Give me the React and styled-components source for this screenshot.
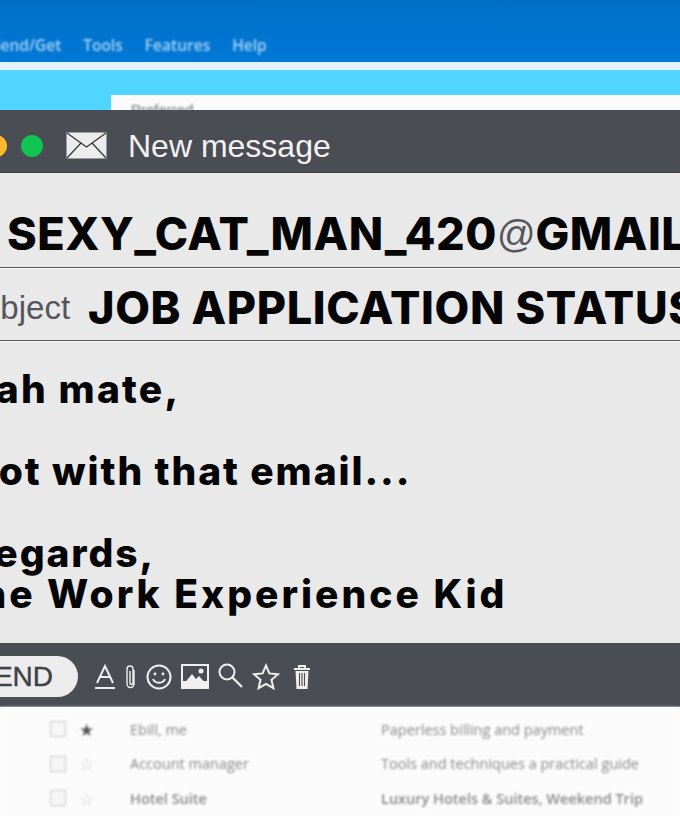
import React from "react";
import styled, { createGlobalStyle } from "styled-components";

const GlobalStyle = createGlobalStyle`
  html, body {
    margin: 0;
    padding: 0;
    background: #fff;
  }
`;

const Page = styled.div`
  width: 680px;
  height: 816px;
  overflow: hidden;
  font-family: "Liberation Sans", Arial, sans-serif;
`;

const TopArea = styled.div`
  height: 110px;
  display: flex;
  flex-direction: column;
  overflow: hidden;
`;

const MenuBar = styled.div`
  height: 62px;
  flex: none;
  display: flex;
  align-items: flex-end;
  gap: 22px;
  padding: 0 0 7px 0;
  margin-left: -8px;
  background: linear-gradient(#006fc6, #0078d6);
  box-sizing: border-box;
`;

const MenuItem = styled.span`
  font-family: "Open Sans", sans-serif;
  font-size: 15.5px;
  line-height: 20px;
  font-weight: 600;
  color: #a9d2f2;
  filter: blur(1.1px);
`;

const Divider = styled.div`
  height: 8px;
  flex: none;
  background: #e2f3fd;
`;

const CyanBand = styled.div`
  flex: 1;
  display: flex;
  padding: 25px 0 0 111px;
  background: #4fd5ff;
`;

const Sheet = styled.div`
  flex: 1;
  padding: 6px 0 0 20px;
  background: #fafafa;
  font-size: 15px;
  line-height: 18px;
  color: #777;
  overflow: hidden;
`;

const SheetText = styled.span`
  filter: blur(1.2px);
  display: inline-block;
`;

const Header = styled.header`
  height: 63px;
  display: flex;
  align-items: center;
  padding-top: 9px;
  background: #4b4d55;
  border-bottom: 1px solid #3e3f45;
  box-sizing: border-box;
`;

const Light = styled.span`
  width: 22px;
  height: 22px;
  flex: none;
  border-radius: 50%;
  background: ${({ $color }) => $color};
  margin-left: ${({ $left }) => $left}px;
`;

const EnvelopeIcon = styled.svg`
  width: 41px;
  height: 27px;
  margin-left: 23px;
  flex: none;
`;

const Title = styled.h1`
  margin: 0 0 0 21px;
  font-size: 32px;
  line-height: 40px;
  font-weight: 400;
  color: #f2f2f2;
`;

const Body = styled.div`
  height: 470px;
  background: #e9e9ea;
  overflow: hidden;
`;

const AddressRow = styled.div`
  height: 94px;
  padding: 0 0 5px 7px;
  display: flex;
  align-items: flex-end;
  white-space: nowrap;
  box-sizing: border-box;
`;

const SubjectRow = styled.div`
  height: 71px;
  display: flex;
  align-items: center;
  gap: 18px;
  padding-top: 7px;
  margin-left: -40px;
  white-space: nowrap;
  box-sizing: border-box;
`;

const Rule = styled.div`
  height: 1px;
  background: #55565a;
  border-bottom: 1px solid #fafafa;
`;

const Bold = styled.span`
  font-family: Inter, "Liberation Sans", sans-serif;
  font-weight: 800;
  font-size: 45px;
  line-height: 56px;
  color: #050505;
  letter-spacing: ${({ $spacing }) => $spacing}px;
`;

const At = styled.span`
  font-size: 38px;
  line-height: 56px;
  color: #55565c;
`;

const Label = styled.span`
  font-size: 33px;
  line-height: 40px;
  color: #55565c;
`;

const Message = styled.div`
  padding-top: 26px;
`;

const Paragraph = styled.p`
  margin: 0 0 ${({ $last }) => ($last ? 0 : 41)}px ${({ $left }) => $left}px;
  font-family: Inter, "Liberation Sans", sans-serif;
  font-weight: 800;
  font-size: 39px;
  line-height: 41px;
  letter-spacing: ${({ $spacing }) => $spacing}px;
  color: #050505;
  white-space: nowrap;
`;

const Footer = styled.footer`
  height: 64px;
  display: flex;
  align-items: center;
  padding-top: 3px;
  background: #4b4d55;
  box-sizing: border-box;
`;

const SendButton = styled.div`
  width: 78px;
  height: 41px;
  flex: none;
  display: flex;
  align-items: center;
  justify-content: flex-end;
  padding-right: 25px;
  box-sizing: border-box;
  border-radius: 0 21px 21px 0;
  background: #ececec;
  font-size: 28px;
  color: #3f4148;
  -webkit-text-stroke: 0.4px #3f4148;
`;

const Tools = styled.div`
  display: flex;
  align-items: center;
  gap: 9px;
  margin-left: 17px;
`;

const ToolIcon = styled.svg`
  height: 28px;
  width: ${({ width }) => width}px;
  flex: none;
  fill: none;
  stroke: #f0f0f0;
  stroke-width: 2;
`;

const List = styled.div`
  padding-top: 5px;
  background: #fbfbfb;
  height: 109px;
  box-sizing: border-box;
  filter: blur(1.1px);
`;

const ListRow = styled.div`
  height: 34.5px;
  display: grid;
  grid-template-columns: 50px 31px 49px 251px 1fr;
  align-items: center;
  font-family: "Open Sans", sans-serif;
  font-size: 14.5px;
  color: #8a8a8a;
  white-space: nowrap;
`;

const Checkbox = styled.span`
  grid-column: 2;
  width: 14px;
  height: 14px;
  border: 1px solid #ccc;
  background: #f6f6f6;
`;

const Star = styled.span`
  grid-column: 3;
  font-size: 17px;
  line-height: 1;
  margin-left: -2px;
  color: ${({ $filled }) => ($filled ? "#555" : "#ccc")};
`;

const Sender = styled.span`
  grid-column: 4;
  font-weight: ${({ $bold }) => ($bold ? 600 : 400)};
`;

const Topic = styled.span`
  grid-column: 5;
  font-weight: ${({ $bold }) => ($bold ? 600 : 400)};
`;

const rows = [
  { star: true, sender: "Ebill, me", topic: "Paperless billing and payment" },
  { sender: "Account manager", topic: "Tools and techniques a practical guide" },
  { sender: "Hotel Suite", topic: "Luxury Hotels & Suites, Weekend Trip", bold: true },
];

export default function App() {
  return (
    <Page>
      <GlobalStyle />
      <TopArea>
        <MenuBar>
          <MenuItem>Send/Get</MenuItem>
          <MenuItem>Tools</MenuItem>
          <MenuItem>Features</MenuItem>
          <MenuItem>Help</MenuItem>
        </MenuBar>
        <Divider />
        <CyanBand>
          <Sheet>
            <SheetText>Preferred</SheetText>
          </Sheet>
        </CyanBand>
      </TopArea>

      <Header>
        <Light $color="#fdb92e" $left={-15} />
        <Light $color="#12c552" $left={14} />
        <EnvelopeIcon viewBox="0 0 41 27">
          <rect x="0.5" y="0.5" width="40" height="26" fill="#ececec" />
          <path d="M1 1 L20.5 15 L40 1 M1 26 L15 11 M40 26 L26 11" fill="none" stroke="#333" strokeWidth="1.2" />
        </EnvelopeIcon>
        <Title>New message</Title>
      </Header>

      <Body>
        <AddressRow>
          <Bold $spacing={0.5}>SEXY_CAT_MAN_420</Bold>
          <At>@</At>
          <Bold $spacing={0.5}>GMAIL.COM</Bold>
        </AddressRow>
        <Rule />
        <SubjectRow>
          <Label>Subject</Label>
          <Bold $spacing={0.6}>JOB APPLICATION STATUS</Bold>
        </SubjectRow>
        <Rule />
        <Message>
          <Paragraph $left={-57} $spacing={2.2}>Yeah mate,</Paragraph>
          <Paragraph $left={-33} $spacing={1.9}>Not with that email...</Paragraph>
          <Paragraph $left={-33} $spacing={1.9} $last>Regards,</Paragraph>
          <Paragraph $left={-48} $spacing={3}>The Work Experience Kid</Paragraph>
        </Message>
      </Body>

      <Footer>
        <SendButton>END</SendButton>
        <Tools>
          <ToolIcon width={20} viewBox="0 0 20 28">
            <path d="M2 20 L10 3 L18 20 M5 14 H15" />
            <path d="M0 25 H20" />
          </ToolIcon>
          <ToolIcon width={13} viewBox="0 0 13 28">
            <path strokeWidth="1.4" d="M10 7 V21 a3.5 3.5 0 0 1 -7 0 V6 a3 3 0 0 1 6 0 V20 a1.5 1.5 0 0 1 -3 0 V8" />
          </ToolIcon>
          <ToolIcon width={26} viewBox="0 0 26 28">
            <circle cx="13" cy="14" r="11.5" />
            <circle cx="9" cy="11" r="1.4" fill="#f0f0f0" stroke="none" />
            <circle cx="17" cy="11" r="1.4" fill="#f0f0f0" stroke="none" />
            <path d="M7 16 C9 21 17 21 19 16" />
          </ToolIcon>
          <ToolIcon width={28} viewBox="0 0 28 28">
            <rect x="0" y="1" width="28" height="25" fill="#f0f0f0" stroke="none" />
            <rect x="2" y="3" width="24" height="15" fill="#4b4d55" stroke="none" />
            <path d="M2 22 L11 11 L15 16 L18 13 L26 22 V24 H2 Z" fill="#f0f0f0" stroke="none" />
            <circle cx="20" cy="8" r="2.5" fill="#f0f0f0" stroke="none" />
          </ToolIcon>
          <ToolIcon width={25} viewBox="0 0 25 28">
            <circle cx="9" cy="9" r="7.5" />
            <path d="M14.5 14.5 L24 24" strokeWidth="2.2" />
          </ToolIcon>
          <ToolIcon width={28} viewBox="0 0 28 28">
            <path d="M14 2.5 L17.4 10.4 L26 11.2 L19.5 16.8 L21.4 25.2 L14 20.8 L6.6 25.2 L8.5 16.8 L2 11.2 L10.6 10.4 Z" />
          </ToolIcon>
          <ToolIcon width={22} viewBox="-4 0 22 28">
            <path d="M1 6 H17 M6 5 V3 H12 V5" />
            <path d="M2.5 8 H15.5 L14.5 26 H3.5 Z" fill="#f0f0f0" stroke="none" />
            <path d="M6.5 10 V23 M9 10 V23 M11.5 10 V23" stroke="#4b4d55" strokeWidth="1.1" />
          </ToolIcon>
        </Tools>
      </Footer>

      <List>
        {rows.map((row) => (
          <ListRow key={row.sender}>
            <Checkbox />
            <Star $filled={row.star}>{row.star ? "★" : "☆"}</Star>
            <Sender $bold={row.bold}>{row.sender}</Sender>
            <Topic $bold={row.bold}>{row.topic}</Topic>
          </ListRow>
        ))}
      </List>
    </Page>
  );
}
